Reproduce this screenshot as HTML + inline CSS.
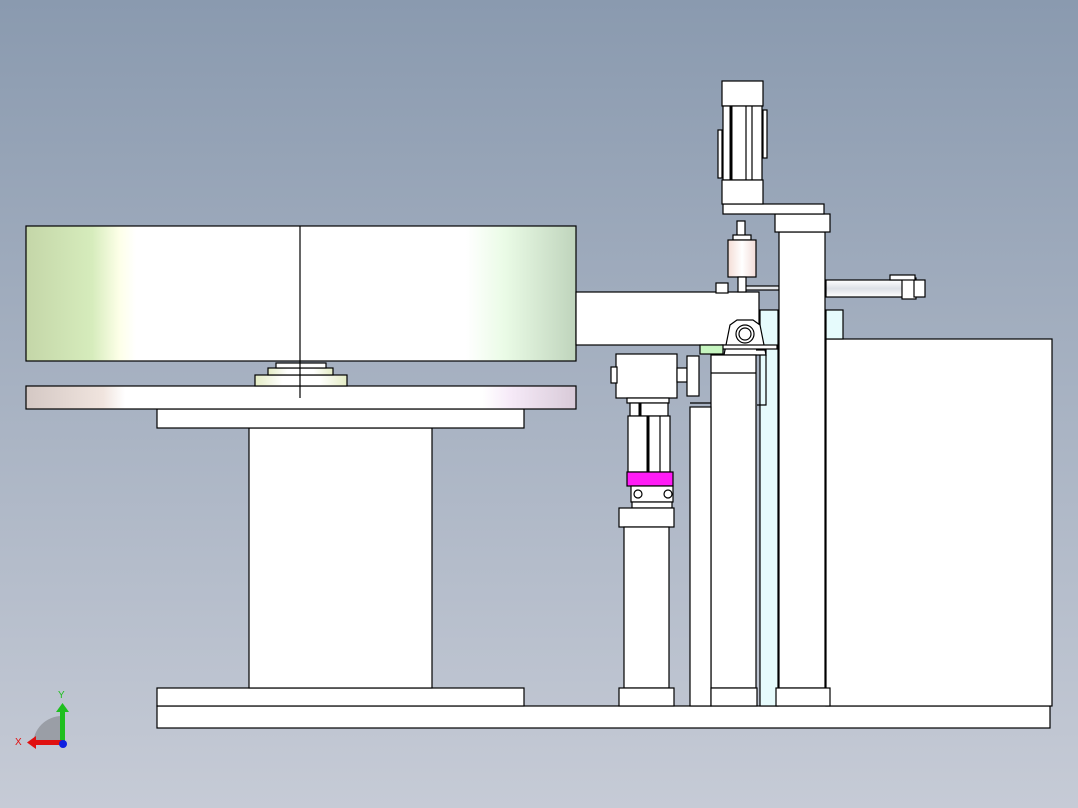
<!DOCTYPE html>
<html><head><meta charset="utf-8"><style>
html,body{margin:0;padding:0;width:1078px;height:808px;overflow:hidden}
svg{display:block}
</style></head><body>
<svg width="1078" height="808" viewBox="0 0 1078 808" xmlns="http://www.w3.org/2000/svg" font-family="Liberation Sans, sans-serif">
<defs>
<linearGradient id="bg" x1="0" y1="0" x2="0" y2="1"><stop offset="0" stop-color="#8a9aaf"/><stop offset="1" stop-color="#c6cbd6"/></linearGradient>
<linearGradient id="drum" x1="0" y1="0" x2="1" y2="0">
<stop offset="0" stop-color="#c4d6a8"/><stop offset="0.12" stop-color="#d6ecbc"/><stop offset="0.17" stop-color="#fdffe8"/><stop offset="0.2" stop-color="#fff"/><stop offset="0.8" stop-color="#fff"/><stop offset="0.87" stop-color="#eafbe6"/><stop offset="1" stop-color="#bfd4bc"/></linearGradient>
<linearGradient id="plate" x1="0" y1="0" x2="1" y2="0">
<stop offset="0" stop-color="#d4c8c4"/><stop offset="0.14" stop-color="#f0e4de"/><stop offset="0.18" stop-color="#fff"/><stop offset="0.83" stop-color="#fff"/><stop offset="0.88" stop-color="#f6eaf8"/><stop offset="1" stop-color="#d8cad8"/></linearGradient>
<linearGradient id="hub" x1="0" y1="0" x2="1" y2="0"><stop offset="0" stop-color="#e4ecc4"/><stop offset="0.3" stop-color="#fff"/><stop offset="0.7" stop-color="#fff"/><stop offset="1" stop-color="#e4ecc4"/></linearGradient>
<linearGradient id="pink" x1="0" y1="0" x2="1" y2="0"><stop offset="0" stop-color="#f4ddd6"/><stop offset="0.5" stop-color="#fff"/><stop offset="1" stop-color="#f2dcd8"/></linearGradient>
<linearGradient id="cyl" x1="0" y1="0" x2="0" y2="1"><stop offset="0" stop-color="#fff"/><stop offset="0.5" stop-color="#dde0e6"/><stop offset="1" stop-color="#fff"/></linearGradient>
</defs>
<rect width="1078" height="808" fill="url(#bg)"/>
<g stroke="#000" stroke-width="1.2" fill="#fff">
<!-- base -->
<rect x="157" y="706" width="893" height="22"/>
<rect x="157" y="688" width="367" height="18"/>
<rect x="249" y="428" width="183" height="260"/>
<rect x="157" y="409" width="367" height="19"/>
<rect x="26" y="386" width="550" height="23" fill="url(#plate)"/>
<rect x="255" y="375" width="92" height="11" fill="url(#hub)"/>
<rect x="268" y="368" width="65" height="7" fill="url(#hub)"/>
<rect x="276" y="363" width="50" height="5"/>
<rect x="26" y="226" width="550" height="135" fill="url(#drum)"/>
<line x1="300" y1="226" x2="300" y2="398"/>
<!-- right cabinet -->
<rect x="826" y="339" width="226" height="367"/>
<rect x="826" y="310" width="17" height="29" fill="#e6fbfc"/>
<rect x="760" y="310" width="18" height="396" fill="#e6fbfc"/>
<!-- arm -->
<rect x="576" y="292" width="183" height="53"/>
<!-- horizontal cylinder -->
<rect x="826" y="280" width="80" height="17" fill="url(#cyl)"/>
<rect x="902" y="278" width="14" height="21"/>
<rect x="914" y="280" width="11" height="17"/>
<rect x="890" y="275" width="25" height="5"/>
<!-- rod -->
<rect x="743" y="286" width="36" height="4" fill="url(#cyl)"/>
<rect x="716" y="283" width="12" height="10"/>
<!-- tall column -->
<rect x="779" y="232" width="46" height="456"/>
<rect x="775" y="214" width="55" height="18"/>
<rect x="723" y="204" width="101" height="10"/>
<!-- motor -->
<rect x="722" y="81" width="41" height="25"/>
<rect x="723" y="106" width="39" height="74"/>
<line x1="731" y1="106" x2="731" y2="180" stroke-width="3"/>
<line x1="746" y1="106" x2="746" y2="180"/>
<line x1="752" y1="106" x2="752" y2="180"/>
<rect x="722" y="180" width="41" height="24"/>
<rect x="718" y="130" width="4" height="48"/>
<rect x="763" y="110" width="4" height="48"/>
<!-- shaft + pink cylinder -->
<rect x="737" y="221" width="8" height="19"/>
<rect x="733" y="235" width="18" height="5"/>
<rect x="728" y="240" width="28" height="37" fill="url(#pink)"/>
<rect x="738" y="277" width="8" height="15"/>
<!-- bearing -->
<path d="M724 355 L730 325 L737 320 L753 320 L760 325 L766 355 Z"/>
<circle cx="745" cy="334" r="9"/>
<circle cx="745" cy="334" r="6"/>
<rect x="722" y="345" width="55" height="4"/>
<rect x="700" y="345" width="23" height="9" fill="#c6f5c0"/>
<!-- columns -->
<rect x="711" y="355" width="45" height="333"/>
<line x1="711" y1="373" x2="756" y2="373"/>
<rect x="690" y="407" width="21" height="299"/>
<rect x="711" y="688" width="46" height="18"/>
<rect x="776" y="688" width="54" height="18"/>
<path d="M756 350 L766 350 L766 405 L757 405" fill="none"/>
<line x1="690" y1="403" x2="711" y2="403"/>
<!-- gearbox -->
<rect x="616" y="354" width="61" height="44"/>
<rect x="611" y="367" width="6" height="16"/>
<rect x="677" y="368" width="10" height="14"/>
<rect x="687" y="356" width="12" height="40"/>
<rect x="627" y="398" width="42" height="5"/>
<rect x="630" y="403" width="38" height="13"/>
<line x1="640" y1="403" x2="640" y2="416" stroke-width="3"/>
<rect x="628" y="416" width="42" height="56"/>
<line x1="648" y1="416" x2="648" y2="472" stroke-width="3"/>
<line x1="660" y1="416" x2="660" y2="472"/>
<rect x="627" y="472" width="46" height="14" fill="#ff1cf6"/>
<rect x="631" y="486" width="42" height="16"/>
<circle cx="638" cy="494" r="4"/><circle cx="668" cy="494" r="4"/>
<rect x="632" y="502" width="40" height="6"/>
<rect x="619" y="508" width="55" height="19"/>
<rect x="624" y="527" width="45" height="161"/>
<rect x="619" y="688" width="55" height="18"/>
</g>
<!-- axis triad -->
<path d="M62 745 L62 716 A29 29 0 0 0 33 745 Z" fill="#9a9ea6"/>
<rect x="60" y="708" width="5" height="38" fill="#1fbf1f"/>
<polygon points="56,712 62.5,703 69,712" fill="#1fbf1f"/>
<rect x="34" y="740" width="28" height="5" fill="#e01010"/>
<polygon points="36,736 27,742.5 36,749" fill="#e01010"/>
<circle cx="63" cy="744" r="4" fill="#1020e0"/>
<text x="58" y="698" font-size="10" fill="#1fbf1f">Y</text>
<text x="15" y="745" font-size="10" fill="#e01010">X</text>
</svg>
</body></html>
